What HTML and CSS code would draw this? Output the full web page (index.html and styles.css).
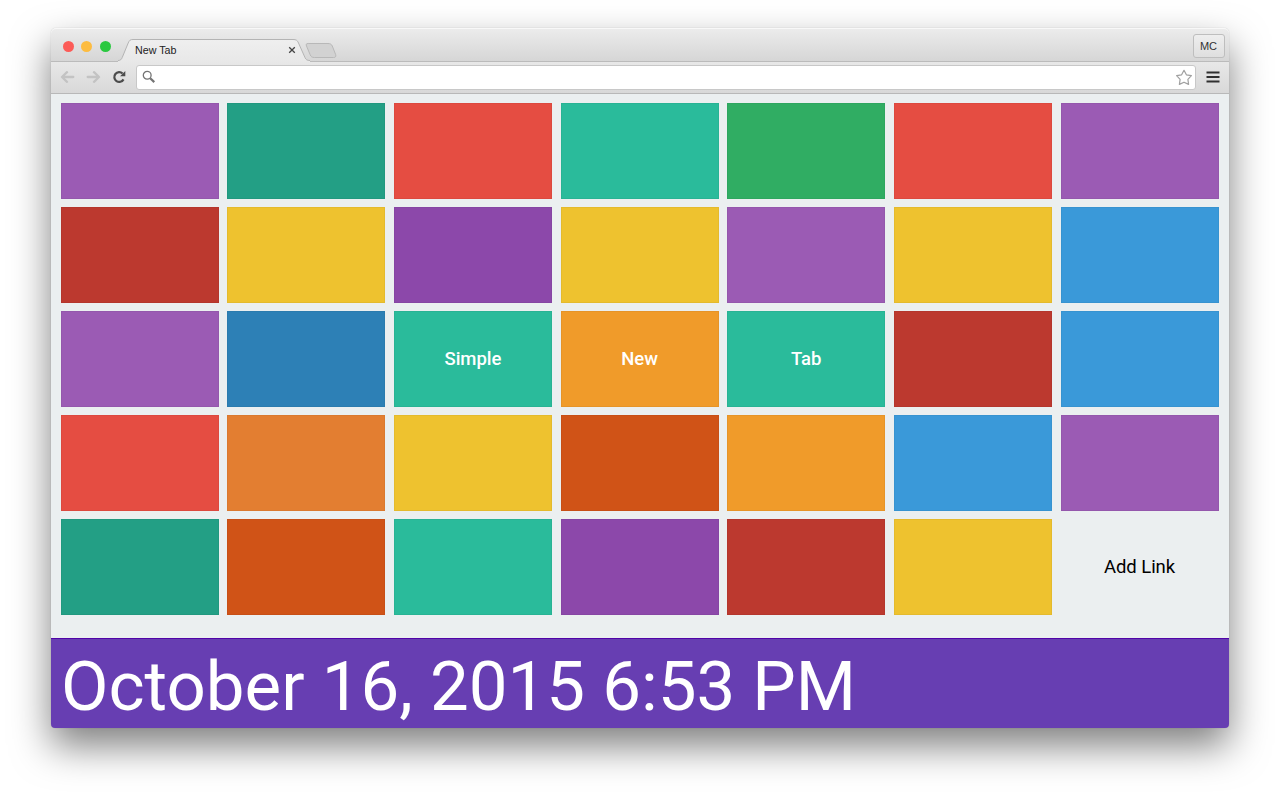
FILE: index.html
```html
<!DOCTYPE html>
<html lang="en">
<head>
<meta charset="utf-8">
<title>New Tab</title>
<link rel="stylesheet" href="styles.css">
</head>
<body>
<div class="window">
  <header class="titlebar">
    <div class="lights"><span class="light red"></span><span class="light amber"></span><span class="light green"></span></div>
    <div class="tab">
      <svg class="tab-shape" width="194" height="24" viewBox="0 0 194 24">
        <defs><linearGradient id="tabfill" x1="0" y1="0" x2="0" y2="1"><stop offset="0" stop-color="#efefef"/><stop offset="1" stop-color="#e8e8e8"/></linearGradient></defs>
        <path d="M0 24V22.500C2.500 22.500 3.400 21.500 4.200 19.600L10.200 5C11.300 2.200 12.500 1.500 15 1.500H175C178 1.500 179.400 2.200 180.500 5L187 19.600C188 21.700 189 22.500 192 22.500V24Z" fill="url(#tabfill)"/>
        <path d="M0 22.500C2.500 22.500 3.400 21.500 4.200 19.600L10.200 5C11.300 2.200 12.500 1.500 15 1.500H175C178 1.500 179.400 2.200 180.500 5L187 19.600C188 21.700 189 22.500 192 22.500" fill="none" stroke="#b4b4b4"/>
      </svg>
      <span class="tab-title">New Tab</span>
      <svg class="close" width="8" height="8" viewBox="0 0 8 8"><path d="M1.200 1.200L6.800 6.800M6.800 1.200L1.200 6.800" stroke="#444" stroke-width="1.300"/></svg>
    </div>
    <svg class="new-tab" width="32" height="17" viewBox="0 0 32 17"><path d="M3.200 1.500H23C25.400 1.500 26.500 2.300 27.300 4L30.600 12.500C31.300 14.600 30.500 15.500 28.500 15.500H9.500C7 15.500 6 14.700 5.200 12.800L1.500 4C.8 2.300 1.200 1.500 3.200 1.500Z" fill="#d2d2d2" stroke="#b8b8b8"/></svg>
    <div class="profile">MC</div>
  </header>
  <div class="toolbar">
    <svg class="back" width="15" height="12" viewBox="0 0 15 12"><path d="M13.300 6H2.500M7 1.200L2 6L7 10.800" fill="none" stroke="#c3c3c3" stroke-width="2.300" stroke-linecap="round" stroke-linejoin="round"/></svg>
    <svg class="forward" width="15" height="12" viewBox="0 0 15 12"><path d="M1.700 6H12.500M8 1.200L13 6L8 10.800" fill="none" stroke="#c3c3c3" stroke-width="2.300" stroke-linecap="round" stroke-linejoin="round"/></svg>
    <svg class="reload" width="14" height="14" viewBox="0 0 14 14"><path d="M10.600 3.500A4.900 4.900 0 1 0 11.500 9.400" fill="none" stroke="#4c4c4c" stroke-width="2.200"/><path d="M13.300 1V6.200H8.100Z" fill="#4c4c4c"/></svg>
    <div class="omnibox">
      <svg width="14" height="14" viewBox="0 0 14 14"><circle cx="5.200" cy="5.200" r="3.900" fill="none" stroke="#737373" stroke-width="1.300"/><path d="M8.200 8.200L12.300 12.100" stroke="#737373" stroke-width="2.200"/></svg>
      <svg class="star" width="18" height="17" viewBox="0 0 18 17"><path d="M9 1.300L11.400 5.800L16.400 6.700L12.900 10.300L13.600 15.400L9 13.200L4.400 15.400L5.100 10.300L1.600 6.700L6.600 5.800Z" fill="#fff" stroke="#a0a0a0" stroke-width="1.200" stroke-linejoin="round"/></svg>
    </div>
    <svg class="menu" width="14" height="12" viewBox="0 0 14 12"><path d="M.5 1.500H13.500M.5 6H13.500M.5 10.500H13.500" stroke="#303030" stroke-width="2.100"/></svg>
  </div>
  <main class="grid">
    <a class="tile amethyst"></a><a class="tile sea"></a><a class="tile coral"></a><a class="tile turquoise"></a><a class="tile emerald"></a><a class="tile coral"></a><a class="tile amethyst"></a>
    <a class="tile brick"></a><a class="tile yellow"></a><a class="tile violet"></a><a class="tile yellow"></a><a class="tile amethyst"></a><a class="tile yellow"></a><a class="tile sky"></a>
    <a class="tile amethyst"></a><a class="tile blue"></a><a class="tile turquoise">Simple</a><a class="tile orange">New</a><a class="tile turquoise">Tab</a><a class="tile brick"></a><a class="tile sky"></a>
    <a class="tile coral"></a><a class="tile carrot"></a><a class="tile yellow"></a><a class="tile rust"></a><a class="tile orange"></a><a class="tile sky"></a><a class="tile amethyst"></a>
    <a class="tile sea"></a><a class="tile rust"></a><a class="tile turquoise"></a><a class="tile violet"></a><a class="tile brick"></a><a class="tile yellow"></a><a class="tile add">Add Link</a>
  </main>
  <footer class="clock">October 16, 2015 6:53 PM</footer>
</div>
</body>
</html>
```
FILE: styles.css
```css
* { box-sizing: border-box; }
body {
  margin: 0;
  height: 800px;
  overflow: hidden;
  background: #fff;
  padding: 28px 51px 0 51px;
  font-family: Roboto, sans-serif;
}
.window {
  height: 700px;
  display: flex;
  flex-direction: column;
  border-radius: 5px;
  background: #ebeff0;
  box-shadow: 0 0 1px rgba(0,0,0,.3), 0 18px 38px rgba(0,0,0,.5);
}
.titlebar {
  height: 34px;
  flex: none;
  display: flex;
  align-items: flex-start;
  border-radius: 5px 5px 0 0;
  border-bottom: 1px solid #bbb;
  background: linear-gradient(#ececec, #d6d6d6);
  box-shadow: inset 0 1px #f8f8f8;
}
.lights { display: flex; gap: 7.500px; padding: 12.500px 0 0 11.500px; }
.light { width: 11px; height: 11px; border-radius: 50%; }
.red { background: #fc5b57; }
.amber { background: #fdbc40; }
.green { background: #2bc840; }
.tab {
  position: relative;
  width: 194px;
  height: 24px;
  margin: 10px 0 0 7px;
  padding: 0 16px 0 17.500px;
  display: flex;
  align-items: center;
  justify-content: space-between;
  font: 10.700px/24px "Liberation Sans", sans-serif;
  color: #222;
}
.tab-shape { position: absolute; left: 0; top: 0; }
.tab-title, .close { position: relative; }
.new-tab { margin: 14px 0 0 -7px; }
.profile {
  margin: 6px 4.500px 0 auto;
  width: 32px;
  height: 24px;
  border: 1px solid #bebebe;
  border-radius: 3px;
  background: linear-gradient(#eee, #dfdfdf);
  text-align: center;
  font: 11px/23px "Liberation Sans", sans-serif;
  color: #333;
}
.toolbar {
  height: 32px;
  flex: none;
  display: flex;
  align-items: center;
  padding: 0 9.500px 1px 9px;
  border-bottom: 1px solid #b8b8b8;
  background: linear-gradient(#e8e8e8, #d8d8d8);
}
.forward { margin-left: 11px; }
.reload { margin-left: 11px; }
.omnibox {
  flex: 1;
  height: 25px;
  margin: 0 10px 0 10px;
  padding: 0 2px 0 5px;
  display: flex;
  align-items: center;
  justify-content: space-between;
  border: 1px solid #c8c8c8;
  border-radius: 3px;
  background: #fff;
}
.grid {
  flex: 1;
  display: grid;
  grid-template-columns: repeat(7, 158px);
  grid-auto-rows: 95.500px;
  gap: 8.500px 8.670px;
  padding: 9px 9px 9px 9.600px;
  align-content: start;
}
.tile {
  display: flex;
  align-items: center;
  justify-content: center;
  border: 1px solid rgba(0,0,0,.04);
  font-size: 18.500px;
  font-weight: 500;
  letter-spacing: -.05px;
  color: #fff;
}
.amethyst { background: #9b5bb4; }
.sea { background: #239f85; }
.coral { background: #e54d42; }
.turquoise { background: #2abb9b; }
.emerald { background: #30ad63; }
.brick { background: #bc392f; }
.yellow { background: #eec22f; }
.violet { background: #8c48aa; }
.sky { background: #3a99d9; }
.blue { background: #2d80b6; }
.orange { background: #f09b2a; }
.carrot { background: #e37e31; }
.rust { background: #d05317; }
.add { border: 0; color: #000; font-weight: 400; }
.clock {
  flex: none;
  height: 90.500px;
  padding-left: 10px;
  border-top: 1px solid #5104a8;
  border-radius: 0 0 4px 4px;
  background: #673eb2;
  background-clip: padding-box;
  color: #fff;
  font-size: 69px;
  line-height: 96px;
  white-space: nowrap;
}
```
